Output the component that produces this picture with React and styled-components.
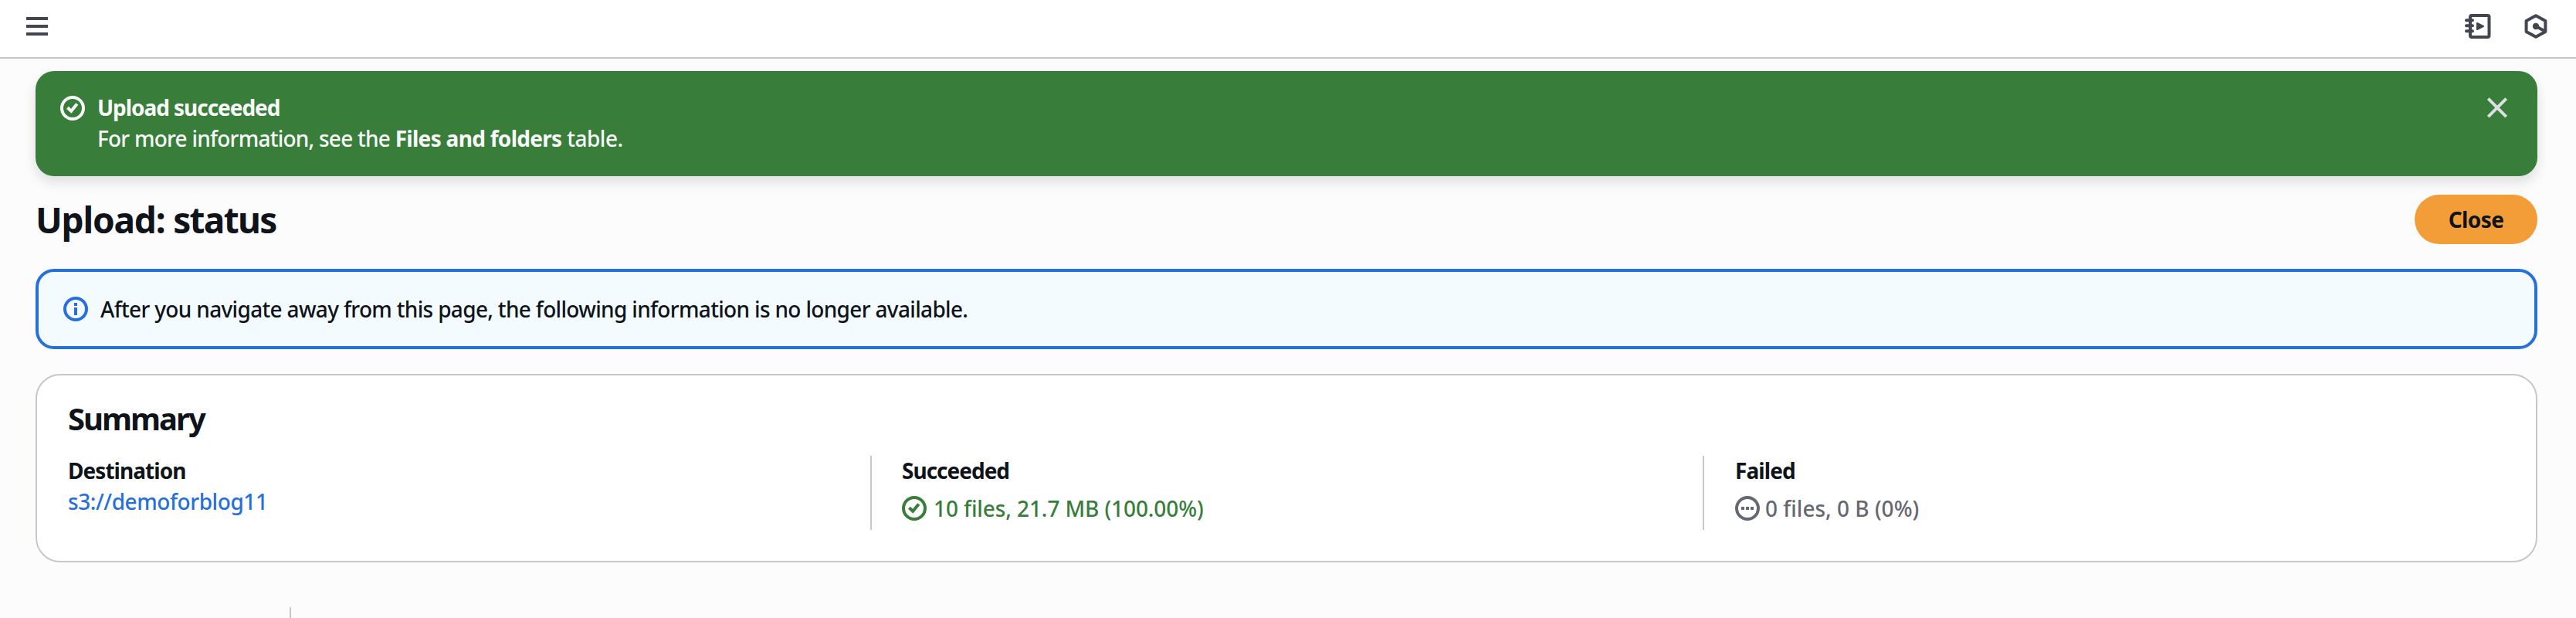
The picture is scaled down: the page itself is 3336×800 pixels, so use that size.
import React from 'react';
import styled, { createGlobalStyle } from 'styled-components';

const color = {
  text: '#0f141a',
  icon: '#424650',
  border: '#c6c6cd',
  success: '#387e3a',
  info: '#2670dc',
  muted: '#656871',
};

const GlobalStyle = createGlobalStyle`
  * { box-sizing: border-box; }
  body {
    margin: 0;
    background: #fcfcfc;
    color: ${color.text};
    font-family: "Noto Sans", "Open Sans", sans-serif;
    font-size: 28px;
    font-weight: 500;
    line-height: 40px;
  }
`;

const Page = styled.div`
  height: 800px;
  overflow: hidden;
  display: flex;
  flex-direction: column;
`;

const TopBar = styled.header`
  height: 76px;
  flex: none;
  display: flex;
  justify-content: space-between;
  padding: 18px 36px 0 32px;
  background: #fff;
  border-bottom: 2px solid ${color.border};
`;

const Tools = styled.div`
  display: flex;
  gap: 42px;
`;

const IconButton = styled.button`
  display: block;
  height: 32px;
  padding: 0;
  border: 0;
  background: none;
  color: ${(p) => p.$color || color.icon};
`;

const Svg = styled.svg`
  display: block;
  flex: none;
  fill: none;
  stroke: currentColor;
  stroke-width: 4;
`;

const Text = styled.span`
  white-space: pre;
  font-weight: ${(p) => (p.$bold ? 700 : 500)};
  letter-spacing: ${(p) => p.$track || 0}px;
`;

const Main = styled.main`
  padding: 16px 50px 0 46px;
`;

const Flash = styled.section`
  height: 136px;
  display: flex;
  padding: 27px 36px 0 32px;
  border-radius: 24px;
  background: ${color.success};
  color: #f9f9fa;
  box-shadow: 0 8px 16px rgba(0, 7, 22, 0.12);
`;

const FlashIcon = styled.div`
  padding-top: 5px;
`;

const FlashBody = styled.div`
  flex: 1;
  margin-left: 16px;
`;

const TitleRow = styled.div`
  display: flex;
  align-items: center;
  justify-content: space-between;
  height: 64px;
  margin-top: 24px;
`;

const Title = styled.h1`
  margin: 0;
  font-size: 46px;
  line-height: 60px;
`;

const PrimaryButton = styled.button`
  width: 159px;
  height: 64px;
  padding: 0 0 1px;
  border: 0;
  border-radius: 32px;
  background: #f29d38;
  color: ${color.text};
  font: inherit;
`;

const Alert = styled.section`
  display: flex;
  align-items: center;
  gap: 16px;
  height: 104px;
  margin-top: 32px;
  padding: 0 32px;
  border: 4px solid ${color.info};
  border-radius: 24px;
  background: #f3fbff;
`;

const InfoColor = styled.span`
  color: ${color.info};
`;

const Card = styled.section`
  height: 244px;
  margin-top: 32px;
  padding: 30px 40px 0;
  border: 2px solid ${color.border};
  border-radius: 32px;
  background: #fff;
`;

const CardTitle = styled.h2`
  margin: 0;
  font-size: 40px;
  line-height: 52px;
  letter-spacing: -2px;
`;

const Columns = styled.div`
  display: grid;
  grid-template-columns: 1039px 1078px 1fr;
  height: 96px;
  margin-top: 22px;
`;

const Column = styled.div`
  padding-left: ${(p) => p.$pad || 0}px;
  border-left: ${(p) => (p.$pad ? `2px solid ${color.border}` : '0')};
`;

const Label = styled.div`
  margin-top: -1px;
  font-weight: 700;
  letter-spacing: ${(p) => p.$track}px;
`;

const Link = styled.a`
  color: ${color.info};
  letter-spacing: -0.43px;
`;

const Status = styled.div`
  display: flex;
  align-items: center;
  gap: ${(p) => p.$gap}px;
  margin-top: 9px;
  color: ${(p) => p.$color};
`;

const Footer = styled.div`
  flex: 1;
  margin: 58px 0 0 375px;
  border-left: 2px solid ${color.border};
`;

const MenuIcon = () => (
  <Svg width="32" height="32" viewBox="0 0 32 32">
    <path d="M2 6h28M2 16h28M2 26h28" />
  </Svg>
);

const NotebookIcon = () => (
  <Svg width="34" height="32" viewBox="0 0 34 32">
    <rect x="7" y="2" width="24.5" height="28" rx="2" />
    <path d="M2 8.3h8M2 15.3h8M2 22.3h8" strokeLinecap="round" />
    <path d="M16 12l8 4-8 4z" fill="currentColor" strokeWidth="2" strokeLinejoin="round" />
  </Svg>
);

const HexagonIcon = () => (
  <Svg width="32" height="32" viewBox="0 0 32 32">
    <path d="M16 2.3L28.4 9v14L16 29.7 3.6 23V9z" strokeLinejoin="round" />
    <circle cx="16" cy="16" r="4.2" fill="currentColor" stroke="none" />
    <path d="M16 16l11 6" />
  </Svg>
);

const CheckCircle = () => (
  <Svg width="32" height="32" viewBox="0 0 32 32">
    <circle cx="16" cy="16" r="14" />
    <path d="M9.4 15.2l4.8 4.6 7.6-9.4" />
  </Svg>
);

const InfoCircle = () => (
  <Svg width="32" height="32" viewBox="0 0 32 32">
    <circle cx="16" cy="16" r="14" />
    <path d="M16 8v4M16 14v10" />
  </Svg>
);

const PendingCircle = () => (
  <Svg width="32" height="32" viewBox="0 0 32 32">
    <circle cx="16" cy="16" r="14" />
    <path d="M8 16h4M14 16h4M20 16h4" />
  </Svg>
);

const CrossIcon = () => (
  <Svg width="32" height="32" viewBox="0 0 32 32">
    <path d="M4.3 3.7l23.4 23.4M27.7 3.7L4.3 27.1" />
  </Svg>
);

export default function App() {
  return (
    <Page>
      <GlobalStyle />
      <TopBar>
        <IconButton aria-label="Open navigation"><MenuIcon /></IconButton>
        <Tools>
          <IconButton aria-label="Tutorials"><NotebookIcon /></IconButton>
          <IconButton aria-label="Assistant"><HexagonIcon /></IconButton>
        </Tools>
      </TopBar>
      <Main>
        <Flash>
          <FlashIcon><CheckCircle /></FlashIcon>
          <FlashBody>
            <div><Text $bold $track={-1.05}>Upload succeeded</Text></div>
            <div>
              <Text $track={-0.76}>For more information, see the </Text>
              <Text $bold $track={-0.7}>Files and folders</Text>
              <Text $track={-0.5}> table.</Text>
            </div>
          </FlashBody>
          <FlashIcon>
            <IconButton $color="#dedee3" aria-label="Dismiss"><CrossIcon /></IconButton>
          </FlashIcon>
        </Flash>
        <TitleRow>
          <Title>
            <Text $bold $track={-1.2}>Upload: </Text>
            <Text $bold $track={-1.7}>status</Text>
          </Title>
          <PrimaryButton><Text $bold $track={-0.6}>Close</Text></PrimaryButton>
        </TitleRow>
        <Alert>
          <InfoColor><InfoCircle /></InfoColor>
          <Text $track={-0.67}>After you navigate away from this page, the following information is no longer available.</Text>
        </Alert>
        <Card>
          <CardTitle>Summary</CardTitle>
          <Columns>
            <Column>
              <Label $track={-0.95}>Destination</Label>
              <Link>s3://demoforblog11</Link>
            </Column>
            <Column $pad={39}>
              <Label $track={-1}>Succeeded</Label>
              <Status $gap={9} $color={color.success}>
                <CheckCircle />
                <Text $track={-0.1}>10 files, 21.7 MB (100.00%)</Text>
              </Status>
            </Column>
            <Column $pad={40}>
              <Label $track={-0.9}>Failed</Label>
              <Status $gap={7} $color={color.muted}>
                <PendingCircle />
                <Text>0 files, 0 B (0%)</Text>
              </Status>
            </Column>
          </Columns>
        </Card>
      </Main>
      <Footer />
    </Page>
  );
}
